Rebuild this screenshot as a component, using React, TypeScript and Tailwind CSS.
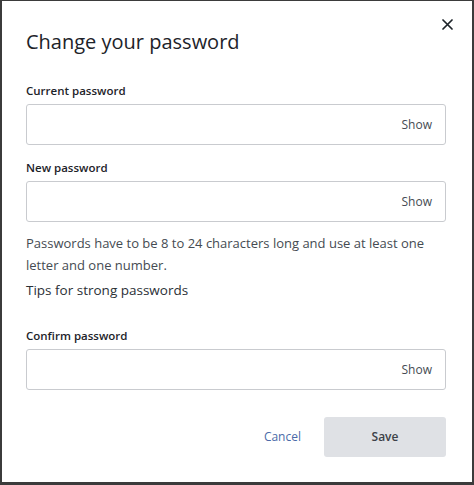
import React from "react";

function Field({ label, mt }: { label: string; mt: string }) {
  return (
    <div className={mt}>
      <div className="text-[11.5px] font-semibold text-[#1d2329] leading-[16px]">{label}</div>
      <div className="mt-[5px] h-[41px] w-[420px] rounded-[3px] border border-[#c9cbcf] flex items-center justify-end pr-[13px]">
        <span className="text-[12px] text-[#454b52]">Show</span>
      </div>
    </div>
  );
}

export default function App() {
  return (
    <div
      className="w-[474px] h-[485px] bg-[#3b3b3b] pt-[1px] pl-[2px] pr-[2px] pb-[3px]"
      style={{ fontFamily: '"Open Sans", "Noto Sans", sans-serif' }}
    >
      <div className="relative w-full h-full bg-white pl-[24px]">
        <button className="absolute right-[19px] top-[18px]">
          <svg width="11" height="11" viewBox="0 0 11 11">
            <path d="M1 1 L10 10 M10 1 L1 10" stroke="#1d2329" strokeWidth="1.7" strokeLinecap="round" />
          </svg>
        </button>
        <h1 className="pt-[28px] text-[20px] leading-[26px] text-[#1d2329] font-normal">Change your password</h1>
        <Field label="Current password" mt="mt-[28px]" />
        <Field label="New password" mt="mt-[15px]" />
        <p className="mt-[10px] w-[420px] text-[13px] leading-[22px] text-[#454b52]">
          Passwords have to be 8 to 24 characters long and use at least one letter and one number.
        </p>
        <div className="mt-[4px] text-[13.5px] leading-[20px] font-medium text-[#2b3036]">Tips for strong passwords</div>
        <Field label="Confirm password" mt="mt-[28px]" />
        <div className="mt-[27px] w-[420px] flex items-center justify-end">
          <button className="text-[12px] text-[#4a6aa8] mr-[23px]">Cancel</button>
          <button className="w-[122px] h-[40px] rounded-[3px] bg-[#dfe1e5] text-[12px] font-semibold text-[#3d4248]">Save</button>
        </div>
      </div>
    </div>
  );
}
